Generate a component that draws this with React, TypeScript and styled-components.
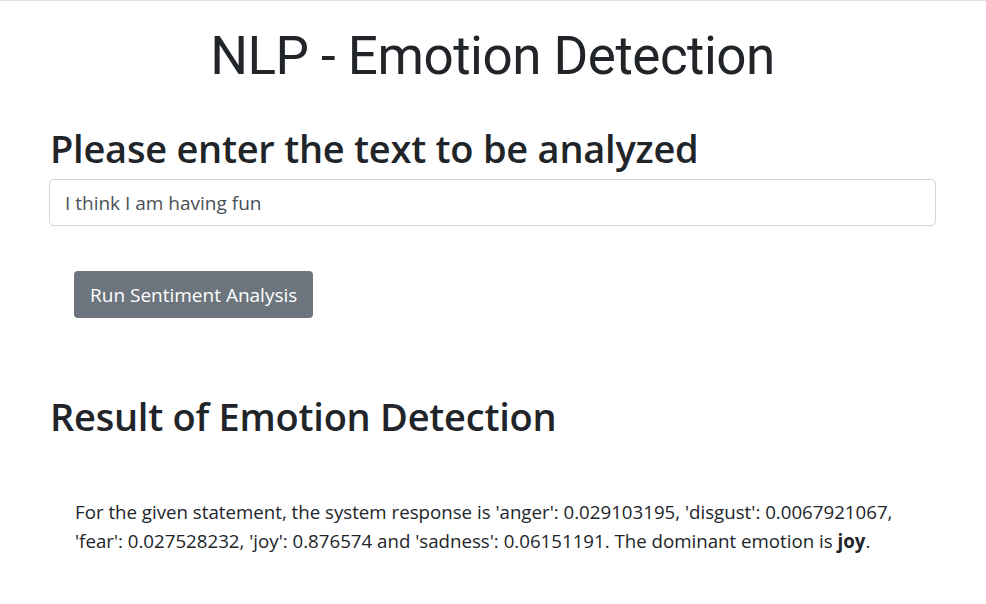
import React from "react";
import styled, { createGlobalStyle } from "styled-components";

const Global = createGlobalStyle`
  html, body { margin: 0; padding: 0; background: #fff; }
  body {
    border-top: 1px solid #e2e2e2;
    font-family: "Open Sans", "Noto Sans", sans-serif;
    color: #212529;
  }
`;

const Page = styled.main`
  display: flex;
  flex-direction: column;
  padding: 0 50px 0 49px;
`;

const Title = styled.h1`
  margin: 24px 0 0;
  text-align: center;
  font-family: "Roboto", sans-serif;
  font-weight: 400;
  font-size: 53px;
  line-height: 1.2;
  letter-spacing: -0.5px;
`;

const Heading = styled.h2<{ $top: number }>`
  margin: ${(p) => p.$top}px 0 0 1px;
  font-weight: 600;
  font-size: 38px;
  line-height: 1.2;
  letter-spacing: -0.25px;
`;

const Input = styled.input`
  box-sizing: border-box;
  margin-top: 8px;
  width: 100%;
  height: 47px;
  padding: 0 15px;
  border: 1px solid #ced4da;
  border-radius: 5px;
  font-family: "Open Sans", "Noto Sans", sans-serif;
  font-size: 19px;
  color: #495057;
  outline: none;
`;

const ButtonRow = styled.div`
  display: flex;
  padding: 45px 0 0 25px;
`;

const Button = styled.button`
  height: 47px;
  padding: 0 16px;
  border: none;
  border-radius: 4px;
  background: #6c757d;
  color: #fff;
  font-family: "Open Sans", "Noto Sans", sans-serif;
  font-size: 19px;
  cursor: pointer;
`;

const Result = styled.p`
  margin: 57px 0 0 26px;
  font-size: 18.7px;
  line-height: 29px;
`;

export default function App() {
  return (
    <>
      <Global />
      <Page>
        <Title>NLP - Emotion Detection</Title>
        <Heading $top={37}>Please enter the text to be analyzed</Heading>
        <Input defaultValue="I think I am having fun" />
        <ButtonRow>
          <Button>Run Sentiment Analysis</Button>
        </ButtonRow>
        <Heading $top={76}>Result of Emotion Detection</Heading>
        <Result>
          For the given statement, the system response is 'anger': 0.029103195, 'disgust': 0.0067921067,
          'fear': 0.027528232, 'joy': 0.876574 and 'sadness': 0.06151191. The dominant emotion is <b>joy</b>.
        </Result>
      </Page>
    </>
  );
}
